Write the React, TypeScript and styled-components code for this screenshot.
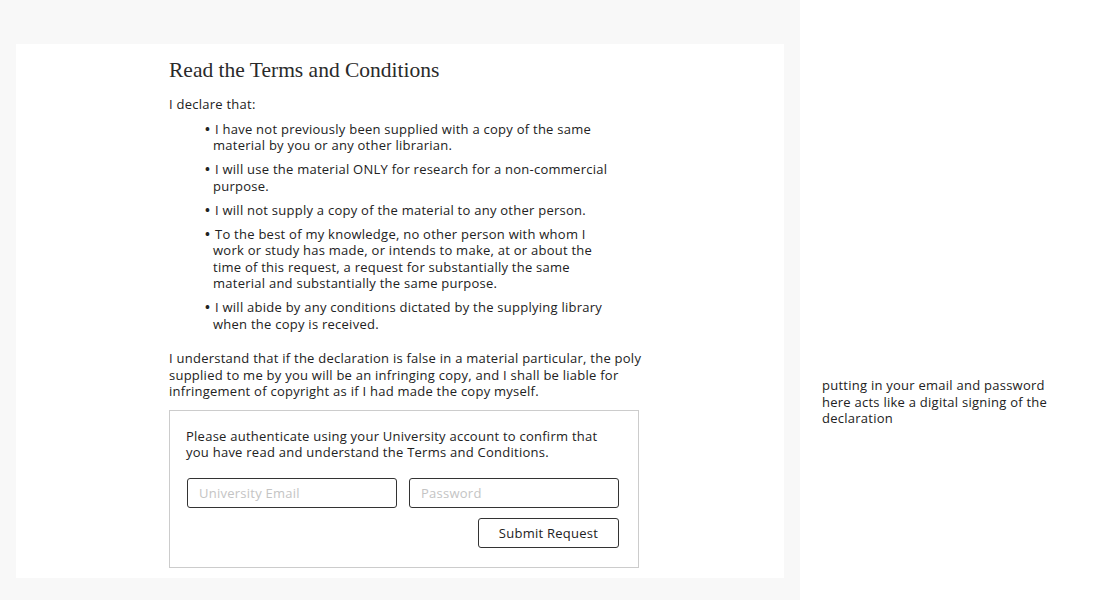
import React from 'react';
import styled, { createGlobalStyle } from 'styled-components';

const bodyFont = `"Open Sans", Lato, "Noto Sans", sans-serif`;

const GlobalStyle = createGlobalStyle`
  html, body {
    margin: 0;
    padding: 0;
    background: #ffffff;
  }
  body {
    font-family: ${bodyFont};
    color: #222222;
    letter-spacing: 0.25px;
  }
`;

const Page = styled.div`
  display: flex;
  width: 1100px;
  height: 600px;
`;

const MainPanel = styled.div`
  width: 800px;
  background: #f8f8f8;
  padding: 44px 16px 22px;
  box-sizing: border-box;
`;

const Card = styled.div`
  background: #ffffff;
  height: 534px;
  padding: 0 0 0 153px;
  box-sizing: border-box;
`;

const Column = styled.div`
  width: 480px;
  padding-top: 12px;
`;

const Title = styled.h1`
  font-family: "Liberation Serif", "DejaVu Serif", serif;
  font-weight: normal;
  font-size: 21.5px;
  letter-spacing: 0;
  color: #2a2a2a;
  margin: 0 0 12px;
  line-height: 28px;
`;

const Paragraph = styled.p`
  font-size: 13px;
  line-height: 16.5px;
  margin: 0;
`;

const BulletList = styled.ul`
  list-style: none;
  margin: 8px 0 18px;
  padding: 0 0 0 44px;
  width: 405px;
`;

const Bullet = styled.li`
  font-size: 13px;
  line-height: 16.5px;
  text-indent: -8px;
  margin-bottom: 7.5px;

  &::before {
    content: '•';
    display: inline-block;
    width: 10px;
    text-indent: 0;
    font-weight: bold;
  }
`;

const AuthBox = styled.div`
  width: 470px;
  box-sizing: border-box;
  margin-top: 10px;
  border: 1px solid #cccccc;
  padding: 17px 19px 19px 16px;
`;

const Fields = styled.div`
  display: flex;
  gap: 12px;
  margin: 17px 0 10px 1px;
`;

const Input = styled.input`
  width: 210px;
  height: 30px;
  box-sizing: border-box;
  border: 1px solid #333333;
  border-radius: 3px;
  padding: 0 11px;
  font-family: ${bodyFont};
  font-size: 13px;
  letter-spacing: 0.25px;
  color: #222222;
  outline: none;

  &::placeholder {
    color: #c4c4c4;
  }
`;

const Actions = styled.div`
  display: flex;
  justify-content: flex-end;
`;

const SubmitButton = styled.button`
  width: 141px;
  height: 30px;
  background: #ffffff;
  border: 1px solid #333333;
  border-radius: 3px;
  font-family: ${bodyFont};
  font-size: 13px;
  letter-spacing: 0.25px;
  color: #222222;
  cursor: pointer;
`;

const SidePanel = styled.div`
  flex: 1;
  padding: 377px 0 0 22px;
`;

const Note = styled.p`
  font-size: 13px;
  line-height: 16.5px;
  margin: 0;
  width: 235px;
`;

const declarations = [
  'I have not previously been supplied with a copy of the same material by you or any other librarian.',
  'I will use the material ONLY for research for a non-commercial purpose.',
  'I will not supply a copy of the material to any other person.',
  'To the best of my knowledge, no other person with whom I work or study has made, or intends to make, at or about the time of this request, a request for substantially the same material and substantially the same purpose.',
  'I will abide by any conditions dictated by the supplying library when the copy is received.',
];

export default function App() {
  return (
    <>
      <GlobalStyle />
      <Page>
        <MainPanel>
          <Card>
            <Column>
              <Title>Read the Terms and Conditions</Title>
              <Paragraph>I declare that:</Paragraph>
              <BulletList>
                {declarations.map((d) => (
                  <Bullet key={d}>{d}</Bullet>
                ))}
              </BulletList>
              <Paragraph>
                I understand that if the declaration is false in a material particular, the poly
                supplied to me by you will be an infringing copy, and I shall be liable for
                infringement of copyright as if I had made the copy myself.
              </Paragraph>
              <AuthBox>
                <Paragraph>
                  Please authenticate using your University account to confirm that you have
                  read and understand the Terms and Conditions.
                </Paragraph>
                <Fields>
                  <Input type="email" placeholder="University Email" />
                  <Input type="password" placeholder="Password" />
                </Fields>
                <Actions>
                  <SubmitButton>Submit Request</SubmitButton>
                </Actions>
              </AuthBox>
            </Column>
          </Card>
        </MainPanel>
        <SidePanel>
          <Note>
            putting in your email and password here acts like a digital signing of the
            declaration
          </Note>
        </SidePanel>
      </Page>
    </>
  );
}
